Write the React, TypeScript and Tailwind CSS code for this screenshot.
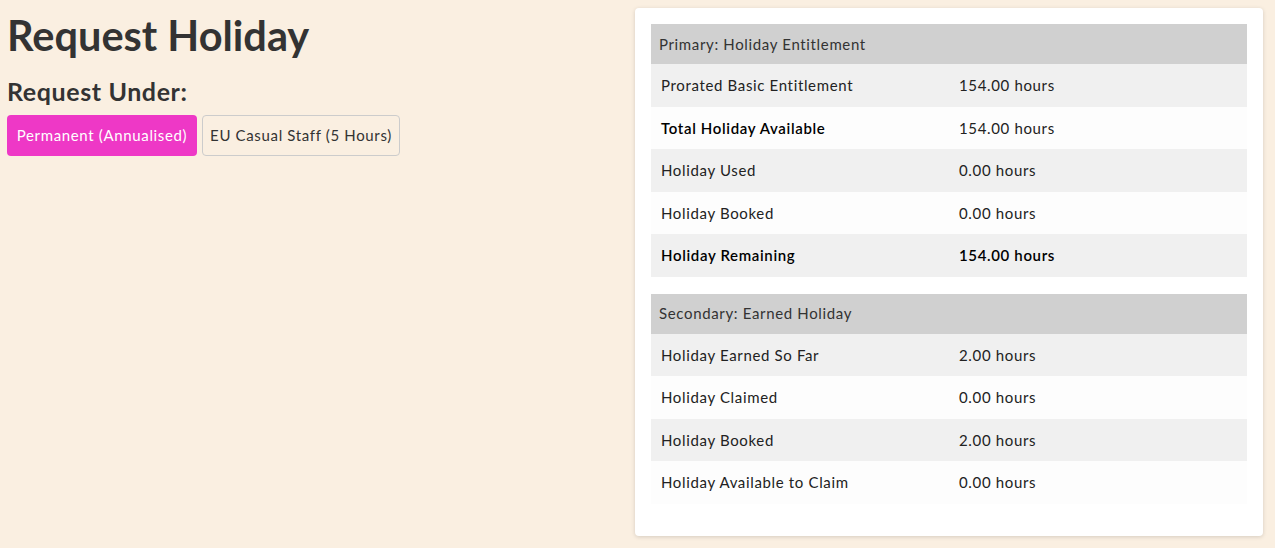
const primary = [
  { label: 'Prorated Basic Entitlement', value: '154.00 hours' },
  { label: 'Total Holiday Available', value: '154.00 hours', labelBold: true },
  { label: 'Holiday Used', value: '0.00 hours' },
  { label: 'Holiday Booked', value: '0.00 hours' },
  { label: 'Holiday Remaining', value: '154.00 hours', labelBold: true, valueBold: true },
]

const secondary = [
  { label: 'Holiday Earned So Far', value: '2.00 hours' },
  { label: 'Holiday Claimed', value: '0.00 hours' },
  { label: 'Holiday Booked', value: '2.00 hours' },
  { label: 'Holiday Available to Claim', value: '0.00 hours' },
]

type Row = { label: string; value: string; labelBold?: boolean; valueBold?: boolean }

function SummaryTable({ title, rows }: { title: string; rows: Row[] }) {
  return (
    <table className="w-full table-fixed border-collapse text-[15px] tracking-[0.65px] text-[#222] mb-[17px]">
      <thead>
        <tr className="bg-[#d0d0d0]">
          <th colSpan={2} className="h-10 px-2 text-left font-normal text-[#333]">
            {title}
          </th>
        </tr>
      </thead>
      <tbody>
        {rows.map((r, i) => (
          <tr key={r.label} className={i % 2 === 0 ? 'bg-[#f0f0f0]' : 'bg-[#fdfdfd]'}>
            <td className={'h-[42.5px] px-[10px] ' + (r.labelBold ? 'font-semibold text-black' : '')}>
              {r.label}
            </td>
            <td className={'h-[42.5px] px-[10px] ' + (r.valueBold ? 'font-semibold text-black' : '')}>
              {r.value}
            </td>
          </tr>
        ))}
      </tbody>
    </table>
  )
}

export default function App() {
  return (
    <div className="min-h-[548px] bg-[#faefe1] text-[#333] font-['Lato','Liberation_Sans',sans-serif]">
      <div className="grid grid-cols-[1fr_628px] gap-[15px] pl-[7px] pr-3 pt-2">
        <div>
          <h1 className="text-[41.5px] leading-none font-bold mt-[7px]">Request Holiday</h1>
          <h2 className="text-[25px] leading-none font-bold mt-[22px] tracking-[0.6px]">Request Under:</h2>
          <div className="flex gap-[5px] mt-[11px]">
            <button className="h-[41px] w-[190px] whitespace-nowrap rounded bg-[#ee38c6] text-white text-[15px] tracking-[0.65px]">
              Permanent (Annualised)
            </button>
            <button className="h-[41px] w-[198px] whitespace-nowrap rounded border border-[#ccc] text-[#333] text-[15px] tracking-[0.65px]">
              EU Casual Staff (5 Hours)
            </button>
          </div>
        </div>
        <div className="bg-white rounded shadow-[0_1px_4px_rgba(0,0,0,0.15)] p-4 pb-[15px]">
          <SummaryTable title="Primary: Holiday Entitlement" rows={primary} />
          <SummaryTable title="Secondary: Earned Holiday" rows={secondary} />
        </div>
      </div>
    </div>
  )
}
